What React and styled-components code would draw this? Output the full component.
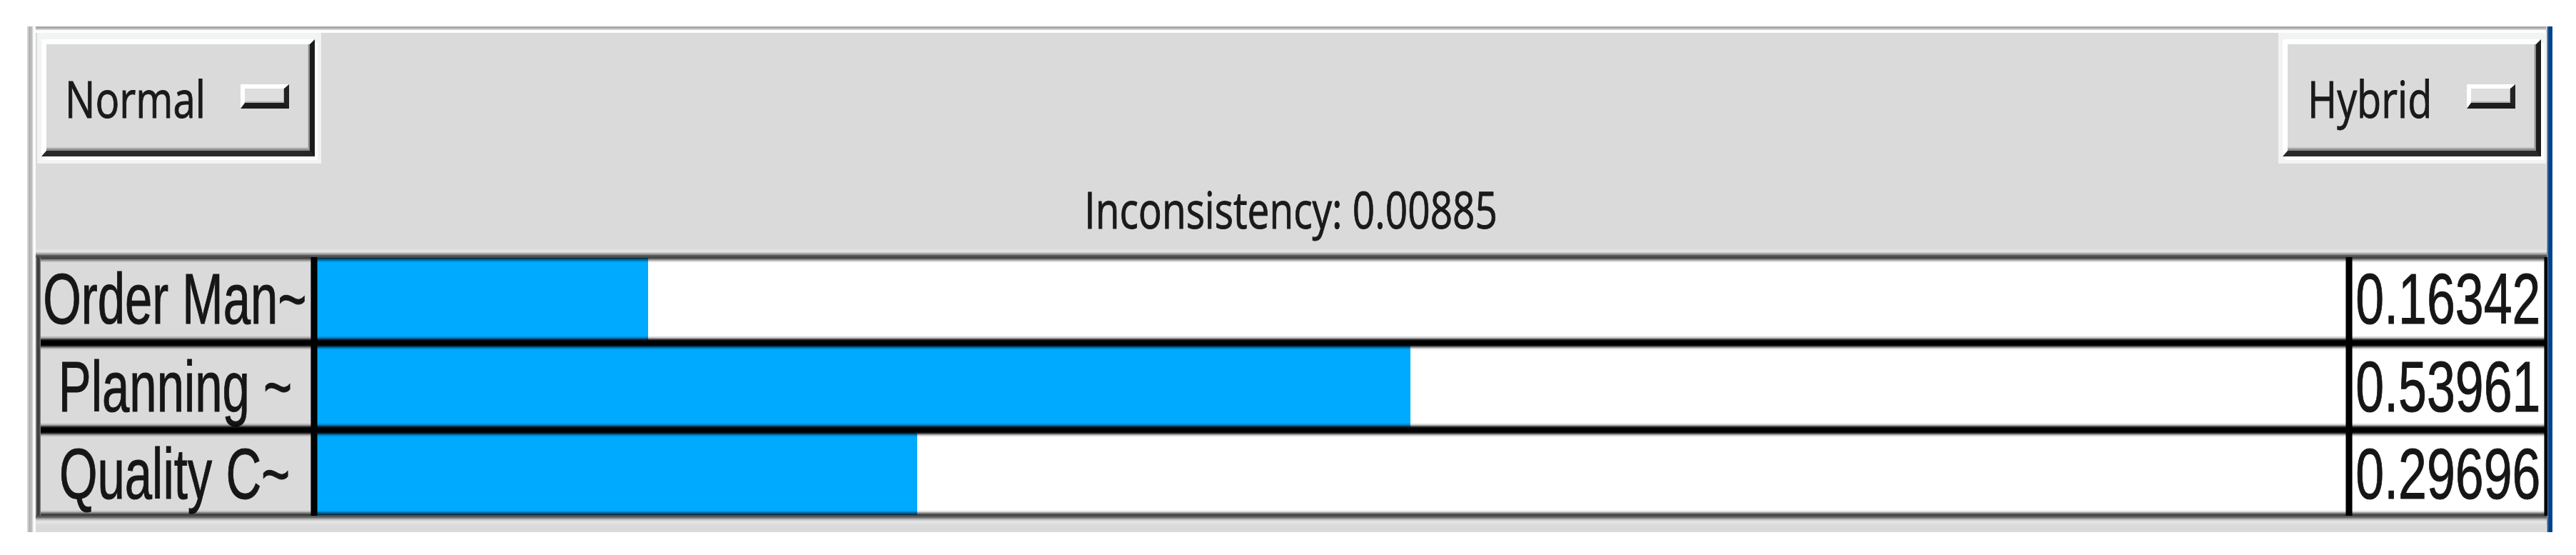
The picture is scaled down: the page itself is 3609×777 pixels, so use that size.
import React from 'react';
import styled, { createGlobalStyle, css } from 'styled-components';

const GlobalStyle = createGlobalStyle`
  body {
    margin: 0;
    background: #fff;
  }
`;

const Page = styled.div`
  box-sizing: border-box;
  width: 3609px;
  height: 777px;
  padding: 37px 33px 32px 38px;
  background: #fff;
`;

const WindowFrame = styled.div`
  box-sizing: border-box;
  display: flex;
  height: 708px;
  background: linear-gradient(to right, #d4d4d4 2px, #b2b2b2 2px, #b8b8b8 6px, #dedede 8px, #fff 9px, #fff 11px, #f2f2f2 12px);
  padding-left: 12px;
`;

const Panel = styled.div`
  flex: 1;
  display: flex;
  flex-direction: column;
  min-width: 0;
  background: #dadada;
  border-right: 2px solid #eceae6;
  box-shadow: inset 0 3px 0 #a8a8a8, inset 0 5px 0 #d0d0d0, inset 0 9px 0 #fdfdfd;
`;

const WindowEdge = styled.div`
  width: 8px;
  margin-left: -1px;
  background: linear-gradient(to right, #7e93ac 1px, #2a5788 2px, #00438a 3px);
`;

const Toolbar = styled.div`
  display: flex;
  justify-content: space-between;
  height: 183px;
  margin-right: -2px;
  padding: 9px 0 0 2px;
`;

const MenuRing = styled.div`
  box-sizing: border-box;
  width: ${({ $width }) => $width}px;
  height: 183px;
  padding: 9px 9px 10px 6px;
  background: #f2f3f3;
`;

const MenuButton = styled.button`
  box-sizing: border-box;
  display: flex;
  align-items: center;
  width: 100%;
  height: 164px;
  padding: 0 29px 0 ${({ $indent }) => $indent}px;
  border: solid;
  border-width: 7px 7px 8px 7px;
  border-color: #fff #1c1c1c #282828 #fff;
  border-radius: 0;
  background: #dadada;
  box-shadow: inset -2px -3px 0 #8f8f8f, inset -3px -5px 0 #c4c4c4, 4px 5px 0 #fff;
  color: #1a1a1a;
  font-family: 'Open Sans', 'Noto Sans', sans-serif;
  font-size: 72px;
  line-height: 98px;
  -webkit-text-stroke: 1px #1a1a1a;
`;

const MenuText = styled.span`
  display: block;
  width: 200px;
  white-space: nowrap;
  text-align: left;
  transform: scaleX(${({ $scale }) => $scale});
  transform-origin: left center;
`;

const Indicator = styled.span`
  box-sizing: border-box;
  flex: none;
  width: 68px;
  height: 34px;
  margin-left: auto;
  margin-top: -3px;
  border: solid;
  border-width: 6px 7px 8px 6px;
  border-color: #fff #222 #1c1c1c #fff;
  background: #dedede;
  box-shadow: inset -1px -2px 0 #b0b0b0;
`;

const Status = styled.div`
  display: flex;
  justify-content: center;
  height: 131px;
  color: #1a1a1a;
  font-family: 'Open Sans', 'Noto Sans', sans-serif;
  font-size: 72px;
  line-height: 98px;
  -webkit-text-stroke: 1px #1a1a1a;
`;

const StatusText = styled.span`
  display: block;
  margin-top: 14px;
  white-space: nowrap;
  transform: scaleX(0.764);
`;

const Table = styled.div`
  display: flex;
  flex-direction: column;
  margin-right: -2px;
  height: 362px;
  box-shadow: 0 -1px 0 #454545, 0 -3px 0 #5c5c5c, 0 -5px 0 #8e8e8e, 0 -7px 0 #c6c6c6, 0 -11px 0 #e3e3e3,
    0 1px 0 #484848, 0 3px 0 #666, 0 5px 0 #9a9a9a, 0 7px 0 #ccc, 0 12px 0 #e2e2e2;
`;

const Row = styled.div`
  display: grid;
  grid-template-columns: 390px 2851px 1fr;
  height: ${({ $height }) => $height}px;
`;

// grid lines fade out softly, so every cell carries its half of each line
const thickTop = 'inset 0 3px 0 #000, inset 0 5px 0 rgba(0,0,0,.8), inset 0 7px 0 rgba(0,0,0,.35), inset 0 9px 0 rgba(0,0,0,.15)';
const thickBottom = 'inset 0 -3px 0 #000, inset 0 -5px 0 rgba(0,0,0,.8), inset 0 -7px 0 rgba(0,0,0,.35), inset 0 -9px 0 rgba(0,0,0,.15)';
const thinTop = 'inset 0 1px 0 #454545, inset 0 3px 0 rgba(0,0,0,.45), inset 0 5px 0 rgba(0,0,0,.28), inset 0 7px 0 rgba(0,0,0,.13)';
const thinBottom = 'inset 0 -1px 0 #484848, inset 0 -3px 0 rgba(0,0,0,.5), inset 0 -5px 0 rgba(0,0,0,.3), inset 0 -7px 0 rgba(0,0,0,.13)';

const Cell = styled.div`
  position: relative;
  display: flex;
  justify-content: ${({ $align }) => $align || 'center'};
  min-width: 0;
  background: ${({ $bg }) => $bg || '#fff'};
  color: #161616;
  font-family: 'Liberation Sans', Arial, sans-serif;
  font-size: 99.5px;
  line-height: 114px;
  -webkit-text-stroke: 1px #161616;

  &::after {
    content: '';
    position: absolute;
    inset: 0;
    box-shadow: inset ${({ $label }) => ($label ? 0 : 4)}px 0 0 #000, inset -4px 0 0 #000,
      inset ${({ $label }) => ($label ? 0 : 5)}px 0 0 rgba(0, 0, 0, 0.55), inset -5px 0 0 rgba(0, 0, 0, 0.55),
      ${({ $first }) => ($first ? thinTop : thickTop)},
      ${({ $last }) => ($last ? thinBottom : thickBottom)};
  }

  ${({ $label }) => $label && css`
    &::before {
      content: '';
      position: absolute;
      z-index: 1;
      inset: 0 auto 0 0;
      width: 7px;
      background: linear-gradient(to right, #707070 2px, #3c3c3c 2px, #3c3c3c 5px, #8c8c8c 7px);
    }
  `}
`;

const CellText = styled.span`
  display: block;
  margin-top: ${({ $top }) => $top}px;
  white-space: nowrap;
  transform: scaleX(${({ $scale }) => $scale});
`;

const Bar = styled.div`
  height: 100%;
  background: #00aaff;
`;

const rows = [
  { label: 'Order Man~', value: '0.16342', share: 16.43, height: 120, top: 2 },
  { label: 'Planning ~', value: '0.53961', share: 53.88, height: 122, top: 5 },
  { label: 'Quality C~', value: '0.29696', share: 29.64, height: 120, top: 5 },
];

const OptionMenu = ({ text, width, scale, indent }) => (
  <MenuRing $width={width}>
    <MenuButton type="button" $indent={indent}>
      <MenuText $scale={scale}>{text}</MenuText>
      <Indicator />
    </MenuButton>
  </MenuRing>
);

const App = () => (
  <Page>
    <GlobalStyle />
    <WindowFrame>
      <Panel>
        <Toolbar>
          <OptionMenu text="Normal" width={398} scale={0.782} indent={26} />
          <OptionMenu text="Hybrid" width={377} scale={0.775} indent={28} />
        </Toolbar>
        <Status>
          <StatusText>Inconsistency: 0.00885</StatusText>
        </Status>
        <Table>
          {rows.map((row, i) => {
            const edges = { $first: i === 0, $last: i === rows.length - 1 };
            return (
              <Row key={row.label} $height={row.height}>
                <Cell {...edges} $label $bg="#dadada">
                  <CellText $top={row.top} $scale={0.692}>{row.label}</CellText>
                </Cell>
                <Cell {...edges} $align="flex-start">
                  <Bar style={{ width: `${row.share}%` }} />
                </Cell>
                <Cell {...edges}>
                  <CellText $top={row.top} $scale={0.72}>{row.value}</CellText>
                </Cell>
              </Row>
            );
          })}
        </Table>
      </Panel>
      <WindowEdge />
    </WindowFrame>
  </Page>
);

export default App;
